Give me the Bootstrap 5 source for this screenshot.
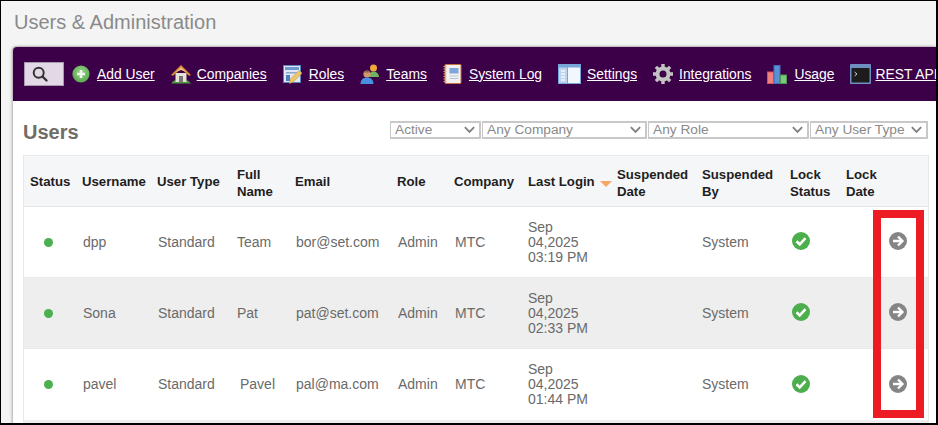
<!doctype html>
<html lang="en">
<head>
<meta charset="utf-8">
<title>Users &amp; Administration</title>
<link href="https://cdn.jsdelivr.net/npm/bootstrap@5.3.0/dist/css/bootstrap.min.css" rel="stylesheet">
<style>
html,body{margin:0;height:100%;overflow:hidden;background:#f4f4f4}
body{font-family:"Liberation Sans",Arial,sans-serif;font-size:14px}
.shot{position:relative;height:425px;overflow:hidden;border-top:1px solid #000;border-left:1px solid #000;border-right:2px solid #000;border-bottom:2px solid #000;background:#f4f4f4;padding:0 0 0 12px}
.page-title{font-size:20px;line-height:24px;font-weight:400;color:#8a8a8a;margin:9px 0 13px 1px}
.panel{background:#fff;box-shadow:-1px 0 3px rgba(0,0,0,.3);height:378px;border-radius:4px 0 0 0}
.toolbar{background:#3c0049;height:54px;border-radius:4px 0 0 0;padding:15px 0 0 11px;overflow:hidden;white-space:nowrap;box-shadow:0 -1px 2px rgba(0,0,0,.15)}
.search-box{width:40px;height:24px;background:#e3d9e6;border:1px solid #a89bad;padding:3px 0 0 7px;flex:none}
.search-box svg{display:block}
.tool-list{gap:16px;margin-left:8px;height:24px}
.tool-item{display:flex;align-items:center;color:#fff;text-decoration:underline;font-size:13.85px;line-height:17px;flex:none}
.tool-item:hover{color:#fff}
.tool-item svg{flex:none;display:block}
.gap4{margin-left:4px}.gap6{margin-left:6px}.gap7{margin-left:7px}
.users-bar{padding:19px 0 0 10px;height:54px}
.users-title{font-size:20px;line-height:24px;font-weight:700;color:#706c66;margin:0}
.filter-row{gap:1px;margin-right:8px;margin-top:1px}
.filter-pick{height:18px;padding:0 0 0 4px;border:1px solid #c8c8c8;border-width:2px 2px 2px 1px;border-radius:0;font-family:"Liberation Sans",Arial,sans-serif;font-size:13.7px;line-height:14px;color:#8a8a8a;background-image:url("data:image/svg+xml,%3csvg xmlns='http://www.w3.org/2000/svg' viewBox='0 0 14 10'%3e%3cpath fill='none' stroke='%23808080' stroke-width='2' d='M2 2l5 5 5-5'/%3e%3c/svg%3e");background-position:right 3px center;background-size:13px 10px;box-shadow:none;flex:none}
.w-a{width:91px}.w-b{width:165px}.w-c{width:161px}.w-d{width:118px}
.grid-wrap{margin:0 8px 0 10px;width:904px}
.users-table{table-layout:fixed;width:904px;margin:0;border:1px solid #e9e9e9;border-width:1px 1px 0 1px;border-collapse:separate;border-spacing:0;font-size:14px;color:#6a6a6a}
.users-table th{background:#f5f6f8;height:51px;padding:0 0 0 6px;font-size:13.2px;font-weight:700;line-height:17px;color:#1e1e1e;vertical-align:middle;border-bottom:1px solid #e4e4e4;box-shadow:none;white-space:nowrap}
.users-table th.two-line{padding-top:4px}
.users-table td{height:71px;padding:0 0 0 7px;line-height:15px;vertical-align:middle;color:#6a6a6a;background:transparent;border-bottom:1px solid #e9e9e9;box-shadow:none}
.users-table tr.alt td{background:#eee}
.users-table tr.end td{height:74px;border-bottom:3px solid #eee}
.users-table td.tight{padding-left:6px}
.dot{display:block;width:9px;height:9px;border-radius:50%;background:#4caf50;margin-left:14px}
.sort-tri{display:inline-block;width:0;height:0;border-left:6px solid transparent;border-right:6px solid transparent;border-top:6px solid #f5a662;margin-left:5px;vertical-align:-1px}
.red-frame{position:absolute;left:872px;top:209px;width:51px;height:208px;border:8px solid #ed1c24}
.nudge{padding-left:9px!important}
.icon-cell svg{display:block;margin-top:-2px}
.lock-cell{padding-left:8px!important}
</style>
</head>
<body>
<div class="shot">
  <h1 class="page-title">Users &amp; Administration</h1>
  <div class="panel">
    <div class="toolbar d-flex">
      <div class="search-box">
        <svg width="16" height="16" viewBox="0 0 16 16"><circle cx="6.700" cy="6.700" r="5" fill="none" stroke="#333" stroke-width="2"/><path d="M10.500 10.500l4 4" stroke="#333" stroke-width="2.400" stroke-linecap="round"/></svg>
      </div>
      <div class="tool-list d-flex">
        <a class="tool-item" href="#"><svg width="18" height="18" viewBox="0 0 18 18"><defs><radialGradient id="ga" cx=".5" cy=".4" r=".6"><stop offset="0" stop-color="#9bd58c"/><stop offset="1" stop-color="#5aa84f"/></radialGradient></defs><circle cx="9" cy="9" r="8.600" fill="url(#ga)"/><path d="M9 5v8M5 9h8" stroke="#eef9ec" stroke-width="2.600"/></svg><span class="gap7">Add User</span></a>
        <a class="tool-item" href="#"><svg width="20" height="20" viewBox="0 0 20 20"><path d="M0 19.500l3-3h14l3 3z" fill="#4f9a3c"/><path d="M4.500 9h11v9h-11z" fill="#e4e1d8"/><path d="M8 12h4v6H8z" fill="#77766e"/><path d="M0 11L10 1l10 10-2 .8-8-7-8 7z" fill="#d98f3a"/><path d="M4.500 8L10 3.500 15.500 8 10 6z" fill="#f2c27d"/></svg><span class="gap6">Companies</span></a>
        <a class="tool-item ms-px" href="#"><svg width="19" height="19" viewBox="0 0 19 19"><rect x=".5" y=".5" width="17" height="17" fill="#dfe9f6" stroke="#5b82b8"/><rect x="2" y="2" width="14" height="3" fill="#6f97cc"/><rect x="3" y="7" width="11" height="1.500" fill="#8fa9cc"/><rect x="3" y="10" width="4" height="6" fill="#4f7fc0"/><path d="M6.500 18.500l1-4.500L16 5.500l3 2.700-8.500 8.500z" fill="#efc56a" stroke="#c99a3d" stroke-width=".6"/></svg><span class="gap7">Roles</span></a>
        <a class="tool-item" href="#"><svg width="20" height="20" viewBox="0 0 20 20"><circle cx="13.500" cy="4" r="3.500" fill="#f2a93c"/><path d="M9 13c0-3.500 2-5.500 4.500-5.500S19 9.500 19 13z" fill="#6fb25d"/><circle cx="7" cy="10" r="3.600" fill="#d09a6e"/><path d="M4 8.500c.8-2 5.200-2 6 0z" fill="#8a5a3a"/><path d="M.5 20c0-4.500 3-6.500 6.500-6.500s6.500 2 6.500 6.500z" fill="#4a90e2"/></svg><span class="gap6">Teams</span></a>
        <a class="tool-item" href="#"><svg width="19" height="20" viewBox="0 0 19 20"><rect x="2" y=".5" width="16" height="19" rx="1" fill="#f1f1ef" stroke="#c9703a"/><path d="M.5 2.500h3M.5 5h3M.5 7.500h3M.5 10h3M.5 12.500h3M.5 15h3M.5 17.500h3" stroke="#d9a477" stroke-width="1.200"/><rect x="6.500" y="4" width="9" height="5.500" fill="#7fa6dc"/><path d="M6.500 12h9M6.500 14.500h9" stroke="#b5c4dc"/></svg><span class="gap7">System Log</span></a>
        <a class="tool-item" href="#"><svg width="23" height="20" viewBox="0 0 23 20"><rect width="23" height="20" fill="#79a6d8"/><rect x="1" y="3.500" width="8" height="15.500" fill="#bcd4ee"/><rect x="10" y="3.500" width="12" height="15.500" fill="#f2f7fd"/><path d="M3 7h4M3 10h4M3 13h4M3 16h4" stroke="#f4f8fd" stroke-width="1.500"/></svg><span class="gap6">Settings</span></a>
        <a class="tool-item" href="#"><svg width="20" height="20" viewBox="0 0 20 20"><circle cx="10" cy="10" r="5.500" fill="none" stroke="#c3c3c3" stroke-width="4"/><g stroke="#c3c3c3" stroke-width="3.400"><path d="M10 0v3.500M10 16.500V20M0 10h3.500M16.500 10H20M2.900 2.900l2.500 2.500M14.600 14.600l2.500 2.500M2.900 17.100l2.500-2.500M14.600 5.400l2.500-2.500"/></g></svg><span class="gap6">Integrations</span></a>
        <a class="tool-item" href="#"><svg width="20" height="19" viewBox="0 0 20 19"><rect x=".5" y="7" width="6" height="11.500" fill="#f08080" stroke="#d9534f"/><rect x="7" y=".5" width="6" height="18" fill="#5b8fd6" stroke="#3f6fb4"/><rect x="13.500" y="10" width="6" height="8.500" fill="#7fc77f" stroke="#4c9a4c"/></svg><span class="gap7">Usage</span></a>
        <a class="tool-item" href="#"><svg width="21" height="20" viewBox="0 0 21 20"><rect width="21" height="20" rx="1" fill="#6f8fc2"/><rect x="1.500" y="4" width="18" height="14.500" fill="#1c1c1c"/><path d="M4.500 8l2.500 2-2.500 2" fill="none" stroke="#ccc"/></svg><span class="gap4">REST API</span></a>
      </div>
    </div>
    <div class="users-bar d-flex justify-content-between">
      <h2 class="users-title">Users</h2>
      <div class="filter-row d-flex">
        <select class="form-select filter-pick w-a" aria-label="Status"><option>Active</option></select>
        <select class="form-select filter-pick w-b" aria-label="Company"><option>Any Company</option></select>
        <select class="form-select filter-pick w-c" aria-label="Role"><option>Any Role</option></select>
        <select class="form-select filter-pick w-d" aria-label="User type"><option>Any User Type</option></select>
      </div>
    </div>
    <div class="grid-wrap">
      <table class="table users-table">
        <colgroup><col style="width:52px"><col style="width:75px"><col style="width:80px"><col style="width:58px"><col style="width:102px"><col style="width:57px"><col style="width:74px"><col style="width:89px"><col style="width:85px"><col style="width:88px"><col style="width:56px"><col style="width:42px"><col style="width:46px"></colgroup>
        <thead><tr><th>Status</th><th>Username</th><th>User Type</th><th class="two-line">Full<br>Name</th><th>Email</th><th>Role</th><th>Company</th><th>Last Login<i class="sort-tri"></i></th><th class="two-line">Suspended<br>Date</th><th class="two-line">Suspended<br>By</th><th class="two-line">Lock<br>Status</th><th class="two-line">Lock<br>Date</th><th></th></tr></thead>
        <tbody>
          <tr><td class="tight"><i class="dot"></i></td><td>dpp</td><td>Standard</td><td class="tight">Team</td><td>bor@set.com</td><td>Admin</td><td>MTC</td><td class="tight">Sep<br>04,2025<br>03:19 PM</td><td></td><td class="tight">System</td><td class="icon-cell lock-cell"><svg width="18" height="18" viewBox="0 0 18 18"><circle cx="9" cy="9" r="9" fill="#4cae4c"/><path d="M4.500 9.300l3.200 3L13.500 6.200" fill="none" stroke="#fff" stroke-width="2.600"/></svg></td><td></td><td class="icon-cell"><svg width="18" height="18" viewBox="0 0 18 18"><circle cx="9" cy="9" r="9" fill="#858585"/><path d="M4 9h9M9 4.500L13.500 9 9 13.500" fill="none" stroke="#fff" stroke-width="2.300"/></svg></td></tr>
          <tr class="alt"><td class="tight"><i class="dot"></i></td><td>Sona</td><td>Standard</td><td class="tight">Pat</td><td>pat@set.com</td><td>Admin</td><td>MTC</td><td class="tight">Sep<br>04,2025<br>02:33 PM</td><td></td><td class="tight">System</td><td class="icon-cell lock-cell"><svg width="18" height="18" viewBox="0 0 18 18"><circle cx="9" cy="9" r="9" fill="#4cae4c"/><path d="M4.500 9.300l3.200 3L13.500 6.200" fill="none" stroke="#fff" stroke-width="2.600"/></svg></td><td></td><td class="icon-cell"><svg width="18" height="18" viewBox="0 0 18 18"><circle cx="9" cy="9" r="9" fill="#858585"/><path d="M4 9h9M9 4.500L13.500 9 9 13.500" fill="none" stroke="#fff" stroke-width="2.300"/></svg></td></tr>
          <tr class="end"><td class="tight"><i class="dot"></i></td><td>pavel</td><td>Standard</td><td class="nudge">Pavel</td><td>pal@ma.com</td><td>Admin</td><td>MTC</td><td class="tight">Sep<br>04,2025<br>01:44 PM</td><td></td><td class="tight">System</td><td class="icon-cell lock-cell"><svg width="18" height="18" viewBox="0 0 18 18"><circle cx="9" cy="9" r="9" fill="#4cae4c"/><path d="M4.500 9.300l3.200 3L13.500 6.200" fill="none" stroke="#fff" stroke-width="2.600"/></svg></td><td></td><td class="icon-cell"><svg width="18" height="18" viewBox="0 0 18 18"><circle cx="9" cy="9" r="9" fill="#858585"/><path d="M4 9h9M9 4.500L13.500 9 9 13.500" fill="none" stroke="#fff" stroke-width="2.300"/></svg></td></tr>
        </tbody>
      </table>
    </div>
  </div>
  <div class="red-frame"></div>
</div>
<script src="https://cdn.jsdelivr.net/npm/bootstrap@5.3.0/dist/js/bootstrap.bundle.min.js"></script>
</body>
</html>
